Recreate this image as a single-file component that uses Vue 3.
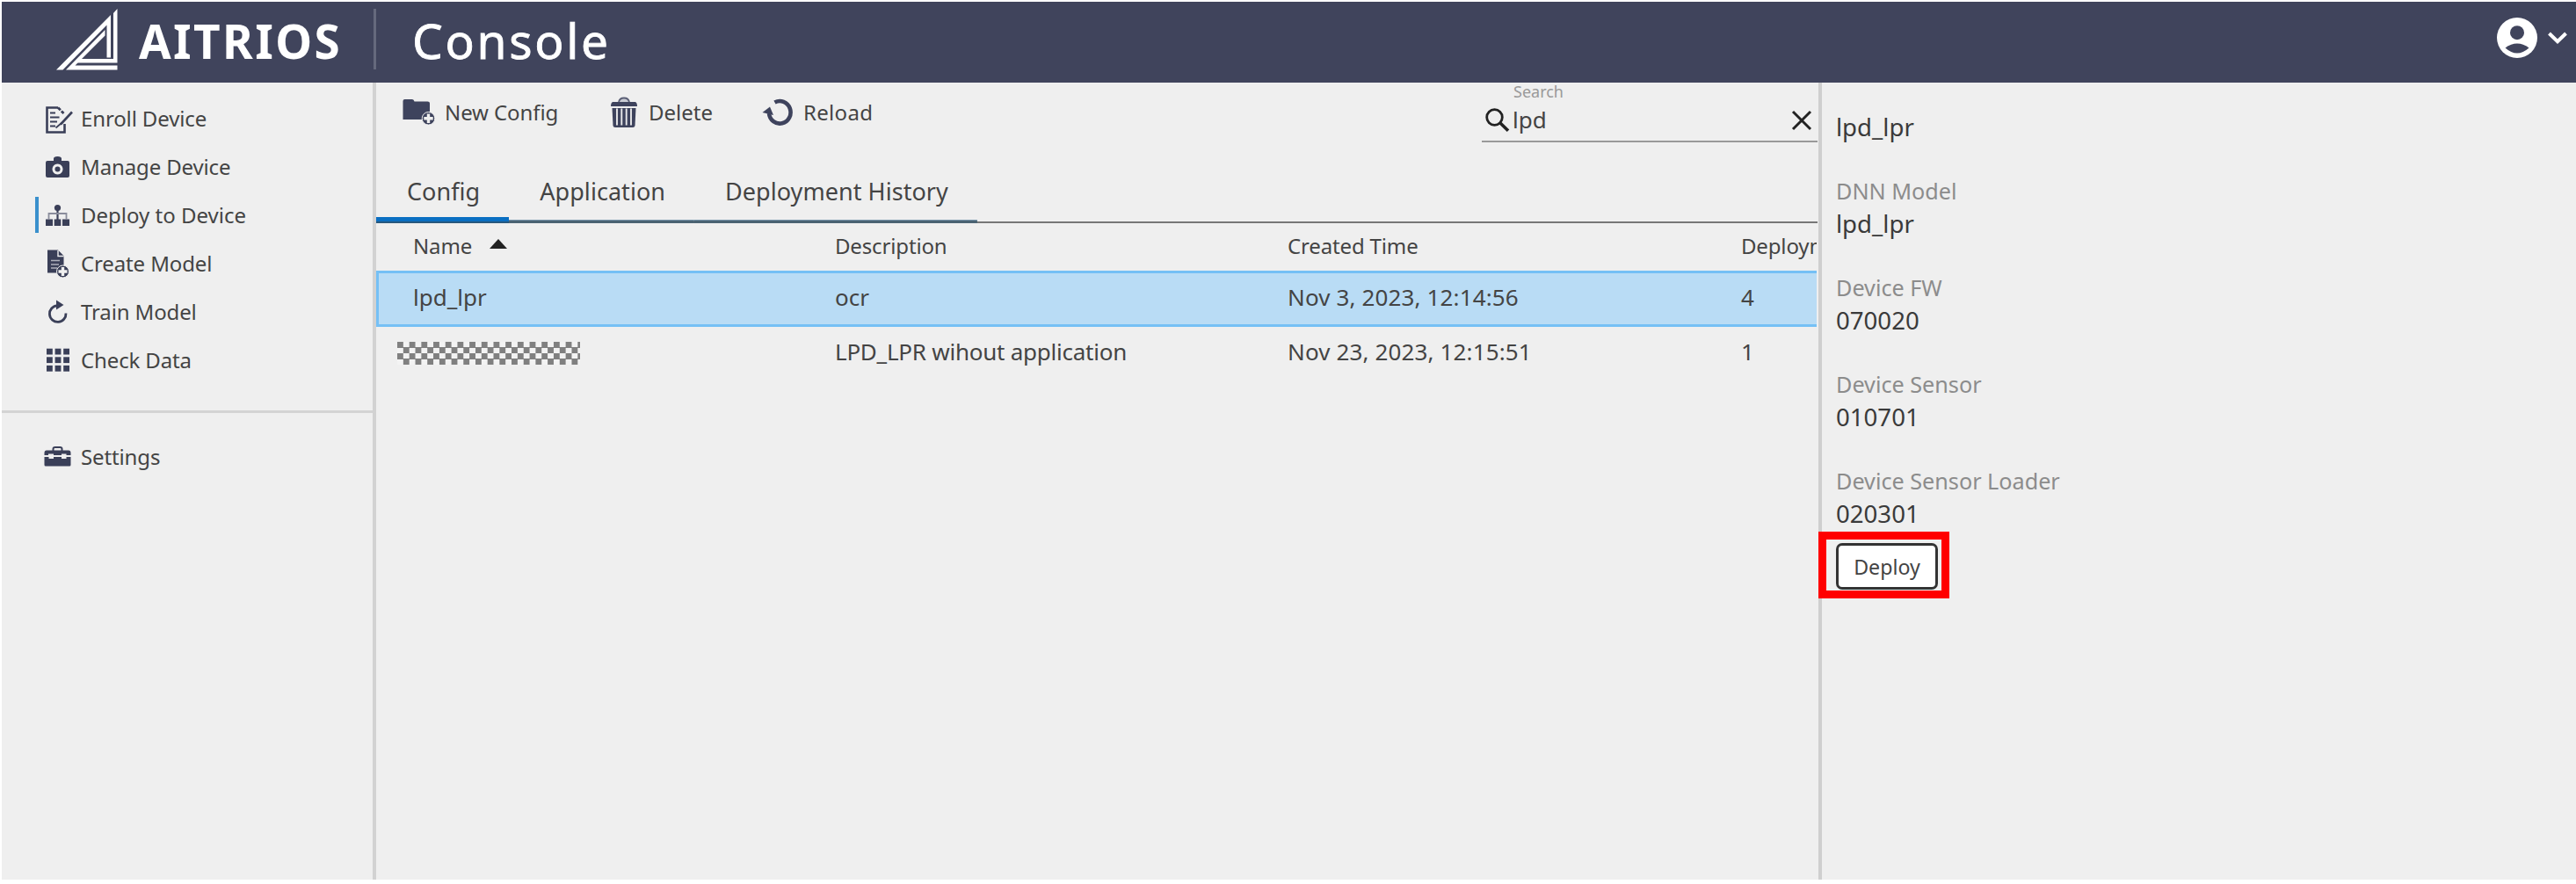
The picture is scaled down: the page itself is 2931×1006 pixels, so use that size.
<script setup>
const nav = [
  { label: 'Enroll Device', icon: 'enroll' },
  { label: 'Manage Device', icon: 'camera' },
  { label: 'Deploy to Device', icon: 'tree', active: true },
  { label: 'Create Model', icon: 'create' },
  { label: 'Train Model', icon: 'train' },
  { label: 'Check Data', icon: 'grid' },
]
const tabs = ['Config', 'Application', 'Deployment History']
const details = [
  { label: 'DNN Model', value: 'lpd_lpr' },
  { label: 'Device FW', value: '070020' },
  { label: 'Device Sensor', value: '010701' },
  { label: 'Device Sensor Loader', value: '020301' },
]
const cells = [0, 9.6, 19.2]
</script>

<template>
  <div class="page">
    <header class="top">
      <svg class="logo" width="70" height="70" viewBox="0 0 70 70" fill="#fff">
        <path d="M0 69.5 62 7v48.500h-4.500V18.500L7.500 69.500z" />
        <path d="M65 5 69.500 0v61.500H24l4-4.500h37z" />
        <path d="M11 69.500 55.500 24v6.500L21.500 64.500h48v5z" />
      </svg>
      <span class="brand">AITRIOS</span>
      <span class="rule"></span>
      <h1>Console</h1>
      <div class="user">
        <svg width="46" height="46" viewBox="0 0 46 46">
          <circle cx="23" cy="23" r="23" fill="#fff" />
          <circle cx="23" cy="17.200" r="8" fill="#40445c" />
          <path d="M9.500 34.500Q23 24.500 36.500 34.500Q23 46.500 9.500 34.500z" fill="#40445c" />
        </svg>
        <svg width="24" height="16" viewBox="0 0 24 16" fill="none" stroke="#fff" stroke-width="4">
          <path d="M2.500 3 12 12.300 21.500 3" />
        </svg>
      </div>
    </header>

    <div class="body">
      <aside class="side">
        <div v-for="n in nav" :key="n.label" class="nav" :class="{ active: n.active }">
          <i class="bar"></i>
          <svg width="34" height="36" viewBox="0 0 34 36" fill="#3a3f58">
            <g v-if="n.icon === 'enroll'" fill="none" stroke="#3a3f58">
              <path d="M16 5.500H3.500v28h20V24" stroke-width="2.600" />
              <path d="M16 5.500l6.500 6.500" stroke-width="2.800" stroke-dasharray="4 1.500" />
              <path d="M7 11.500h6M7 16.500h10.500M7 21.500h8M7 26.500h6" stroke-width="1.900" />
              <path d="M32 10.500 19 24.500" stroke-width="2.600" />
              <path d="M20 23l-6.500 5.500" stroke-width="1.800" />
            </g>
            <g v-else-if="n.icon === 'camera'">
              <path fill-rule="evenodd" d="M4 11h7V8.500Q11 6 15.500 6t4.500 2.500V11h7q2 0 2 2v15q0 2-2 2H4q-2 0-2-2V13q0-2 2-2zm11.500 3.500a6 6 0 1 0 .01 0z" />
              <circle cx="15.500" cy="20.500" r="3" />
            </g>
            <g v-else-if="n.icon === 'tree'">
              <circle cx="15.500" cy="9.500" r="3.600" />
              <path d="M2 22.500h8V30H2zM11.700 22.500h7.600V30h-7.600zM21 22.500h8V30h-8z" />
              <path d="M15.500 10v14" stroke="#3a3f58" stroke-width="2.200" />
              <path d="M5.500 23v-7h20v7" fill="none" stroke="#8a8d9c" stroke-width="1.800" />
            </g>
            <g v-else-if="n.icon === 'create'">
              <path d="M4 2.500h12L22.500 9v12.500q-6 1-5.500 7H4z" />
              <path d="M16 3v6.500h6.500" fill="none" stroke="#efefef" stroke-width="1.400" />
              <path d="M8 14.500h10M8 19h9M8 23h7" stroke="#aeb0bb" stroke-width="1.500" />
              <circle cx="21.500" cy="27" r="7" stroke="#efefef" stroke-width="1" />
              <path d="M21.500 22v10M16.500 27h10" stroke="#efefef" stroke-width="3.400" />
            </g>
            <g v-else-if="n.icon === 'train'">
              <path d="M15 10.800A9.300 9.300 0 1 0 25 19.500" fill="none" stroke="#3a3f58" stroke-width="2.800" />
              <path d="M14 4.500 22.500 10 14 15.500z" />
            </g>
            <g v-else>
              <template v-for="y in cells" :key="y">
                <rect v-for="x in cells" :key="x" :x="x + 3" :y="y + 4.7" width="6.800" height="6.800" />
              </template>
            </g>
          </svg>
          <span>{{ n.label }}</span>
        </div>
        <div class="split"></div>
        <div class="nav">
          <i class="bar"></i>
          <svg width="34" height="36" viewBox="0 0 34 36" fill="#3a3f58">
            <path d="M10.500 11V9q0-2 2-2h6q2 0 2 2v2" fill="none" stroke="#3a3f58" stroke-width="2" />
            <path d="M3 10.500h25q2.500 0 2.500 3V16h-5v-1.500H20V16h-9v-1.500H5V16H.5v-2.500q0-3 2.500-3z" />
            <path d="M.5 18h5v2H11v-2h9v2h5.500v-2h5v9q0 1.500-1.500 1.500H2Q.5 28.500.5 27z" />
          </svg>
          <span>Settings</span>
        </div>
      </aside>

      <main class="main">
        <div class="toolbar">
          <div class="tool t1">
            <svg width="38" height="34" viewBox="0 0 38 34">
              <path d="M.5 4q0-2 2-2H11q2 0 2.500 2.500h15q2.500 0 2.500 2V16q-8 1-8.500 9H.5z" fill="#3e435d" />
              <circle cx="29.500" cy="23.800" r="7.300" fill="#3e435d" stroke="#efefef" stroke-width="1" />
              <path d="M29.500 18.600V29M24.300 23.800h10.400" stroke="#efefef" stroke-width="3.400" />
            </svg>
            <span>New Config</span>
          </div>
          <div class="tool t2">
            <svg width="32" height="36" viewBox="0 0 32 36">
              <path d="M9 6q1-4.500 6-4.500T21 6" fill="#c9cbd3" stroke="#5b5f75" stroke-width="1.800" />
              <path d="M2 6h26q2 1 2 5H0Q0 7 2 6z" fill="#3e435d" />
              <path d="M1.500 13h27l-1 20q-.2 2-2.500 2H5q-2.300 0-2.500-2z" fill="#3e435d" />
              <path d="M7 13.500v19M12.300 13.500v19M17.700 13.500v19M23 13.500v19" stroke="#e8e8ea" stroke-width="1.900" />
            </svg>
            <span>Delete</span>
          </div>
          <div class="tool t3">
            <svg width="36" height="34" viewBox="0 0 36 34">
              <path d="M14.500 5.500A12.300 12.800 0 1 1 8 18" fill="none" stroke="#3e435d" stroke-width="4.600" />
              <path d="M.5 17 9 10.500 13 20z" fill="#3e435d" />
            </svg>
            <span>Reload</span>
          </div>
          <div class="search">
            <label>Search</label>
            <div class="field">
              <svg width="29" height="29" viewBox="0 0 29 29" fill="none" stroke="#222" stroke-width="2.800">
                <circle cx="11.500" cy="11.500" r="8.800" />
                <path d="M18 18l9 8.800" stroke-width="3.600" />
              </svg>
              <span>lpd</span>
              <svg class="clear" width="24" height="24" viewBox="0 0 24 24" stroke="#222" stroke-width="3">
                <path d="M2 2l20 20M22 2 2 22" />
              </svg>
            </div>
          </div>
        </div>

        <div class="tabbar">
          <div v-for="(t, i) in tabs" :key="t" class="tab" :class="{ on: i === 0 }">{{ t }}</div>
        </div>

        <div class="table">
          <div class="tr head">
            <div class="name">Name
              <svg width="20" height="11" viewBox="0 0 20 11"><path d="M10 0 20 11H0z" fill="#222" /></svg>
            </div>
            <div>Description</div>
            <div>Created Time</div>
            <div>Deployment</div>
          </div>
          <div class="tr selected">
            <div>lpd_lpr</div>
            <div>ocr</div>
            <div class="date">Nov 3, 2023, 12:14:56</div>
            <div>4</div>
          </div>
          <div class="tr">
            <div><i class="mask"></i></div>
            <div class="desc">LPD_LPR wihout application</div>
            <div class="date">Nov 23, 2023, 12:15:51</div>
            <div>1</div>
          </div>
        </div>
      </main>

      <section class="detail">
        <div class="value title">lpd_lpr</div>
        <div v-for="d in details" :key="d.label" class="pair">
          <div class="label">{{ d.label }}</div>
          <div class="value">{{ d.value }}</div>
        </div>
        <div class="highlight"><button>Deploy</button></div>
      </section>
    </div>
  </div>
</template>

<style scoped>
.page {
  box-sizing: border-box;
  width: 2931px;
  height: 1006px;
  padding: 2px 0 5px 2px;
  background: #fff;
  overflow: hidden;
  display: flex;
  flex-direction: column;
  font-family: "Noto Sans", "Open Sans", sans-serif;
  font-size: 24px;
  color: #444;
  white-space: nowrap;
}
svg { display: block; flex: none; }
.top {
  height: 92px;
  flex: none;
  display: flex;
  align-items: flex-start;
  background: #40445c;
  color: #fff;
}
.logo { margin: 8px 0 0 62px; }
.brand {
  width: 267px;
  margin-left: 24px;
  font-size: 53px;
  font-weight: 700;
  line-height: 89px;
  letter-spacing: 2.4px;
}
.rule { width: 3px; height: 69px; margin-top: 8px; background: #666a7d; }
h1 {
  margin: 0 0 0 41px;
  font-size: 55px;
  font-weight: 400;
  line-height: 88px;
  letter-spacing: 2.7px;
  -webkit-text-stroke: 0.8px #fff;
}
.user {
  margin: 18px 9px 0 auto;
  display: flex;
  align-items: center;
  gap: 11px;
}
.body { flex: 1; min-height: 0; display: flex; background: #efefef; }
.side {
  box-sizing: border-box;
  width: 426px;
  flex: none;
  padding-top: 13px;
  border-right: 4px solid #d2d2d2;
}
.nav {
  height: 55px;
  padding-left: 38px;
  display: flex;
  align-items: center;
  line-height: 55px;
  letter-spacing: -0.13px;
}
.bar { width: 4px; height: 41px; margin-right: 6px; }
.active { letter-spacing: 0; }
.active .bar { background: #3a90cc; }
.nav svg { margin-right: 8px; }
.split { height: 3px; margin: 30px 0 22px; background: #d3d3d3; }
.main { width: 1641px; flex: none; display: flex; flex-direction: column; }
.toolbar { height: 67px; padding-left: 30px; display: flex; }
.tool { display: flex; align-items: center; line-height: 67px; }
.t1 { width: 237px; gap: 10px; letter-spacing: -0.1px; }
.t2 { width: 172px; gap: 11px; }
.t3 { gap: 11px; letter-spacing: 0.3px; }
.search {
  box-sizing: border-box;
  width: 382px;
  height: 68px;
  margin: 0 1px 0 auto;
  border-bottom: 2px solid #999;
}
.search label {
  display: block;
  padding-left: 36px;
  font-size: 18px;
  line-height: 20px;
  color: #999;
}
.field { display: flex; align-items: center; height: 45px; padding: 0 6px 0 3px; }
.field span { margin-left: 3px; font-size: 26px; line-height: 45px; }
.clear { margin-left: auto; }
.tabbar {
  width: 1640px;
  height: 67px;
  margin-top: 26px;
  display: flex;
  background: linear-gradient(#777, #777) bottom / 100% 2px no-repeat;
}
.tab {
  padding: 0 33px 0 35px;
  font-size: 27px;
  line-height: 61px;
  letter-spacing: 0.05px;
  background: linear-gradient(#7b98ad 0 1px, #4a6272 1px) bottom / 100% 4px no-repeat;
}
.tab.on { background: linear-gradient(#0a6fc2 0 5px, #27587e 5px) bottom / 100% 7px no-repeat; }
.table { width: 1639px; overflow: hidden; }
.tr {
  display: grid;
  grid-template-columns: 480px 515px 516px 86px;
  padding-left: 42px;
  height: 63px;
  font-size: 26px;
  line-height: 57px;
}
.head { height: 54px; font-size: 24px; line-height: 52px; letter-spacing: -0.15px; }
.name { display: flex; gap: 20px; }
.name svg { margin-top: 18px; }
.selected {
  height: 64px;
  line-height: 61px;
  background: #b9dcf5;
  box-shadow: inset 3px 3px #75c0f5, inset 0 -3px #75c0f5;
}
.date { letter-spacing: 0.14px; }
.desc { letter-spacing: -0.24px; }
.mask {
  display: block;
  width: 208px;
  height: 26px;
  margin: 17px 0 0 -18px;
  background: repeating-conic-gradient(#f3f3f3 0 25%, #808080 0 50%) 0 0 / 13.7px 13px;
}
.detail { flex: 1; padding: 31px 0 0 16px; border-left: 4px solid #cfcfcf; }
.value { font-size: 27.600px; line-height: 36px; color: #3a3a3a; }
.title { margin: 1px 0 36px; }
.pair { height: 76px; margin-bottom: 34px; }
.label { font-size: 25.200px; line-height: 38px; color: #8c8c8c; }
.highlight {
  box-sizing: border-box;
  position: relative;
  width: 149px;
  height: 76px;
  margin: -33px 0 0 -20px;
  padding: 4px 0 0 11px;
  border: 9px solid #f00;
}
button {
  box-sizing: border-box;
  width: 116px;
  height: 53px;
  padding: 0;
  border: 3px solid #333;
  border-radius: 7px;
  background: #fff;
  color: #444;
  font: 23.200px/46px "Noto Sans", sans-serif;
}
</style>
